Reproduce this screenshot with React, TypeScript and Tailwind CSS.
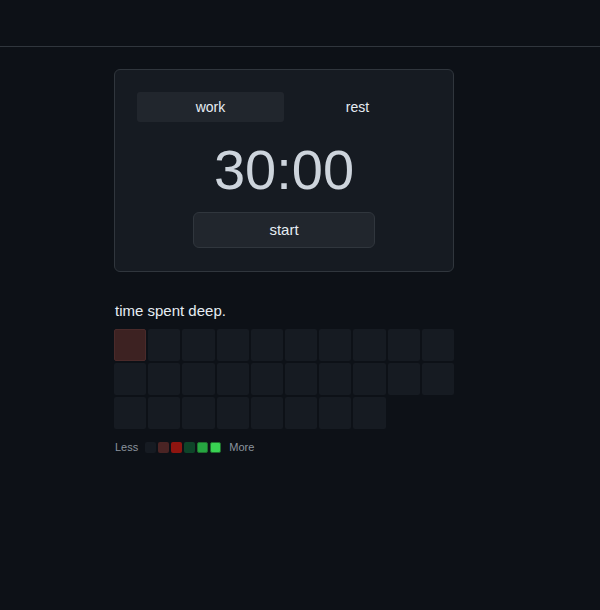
import React from "react";

const cells = Array.from({ length: 28 }, (_, i) => i);
const legend = ["bg-[#161b22]", "bg-[#4a2424]", "bg-[#8e1510]", "bg-[#0e4429]", "bg-[#26a641]", "bg-[#39d353]"];

export default function App() {
  return (
    <div className="min-h-[610px] w-full bg-[#0d1117] font-['Liberation_Sans',Arial,sans-serif] text-[#e6edf3]">
      <div className="h-[47px] border-b border-[#30363d]" />
      <div className="w-[568px] flex flex-col items-center pt-[22px]">
        <div className="w-[340px]">
          <div className="rounded-[6px] border border-[#30363d] bg-[#161b22] px-[22px] pt-[22px] pb-[23px] flex flex-col items-center">
            <div className="w-full grid grid-cols-2">
              <button className="h-[30px] rounded-[3px] bg-[#21262d] text-[14px] text-[#e6edf3]">work</button>
              <button className="h-[30px] rounded-[3px] text-[14px] text-[#e6edf3]">rest</button>
            </div>
            <div className="mt-[19px] h-[58px] flex items-center text-[56px] leading-none text-[#cdd4dc]">30:00</div>
            <button className="mt-[13px] w-[182px] h-[36px] rounded-[6px] border border-[#30363d] bg-[#21262d] text-[15px] text-[#e6edf3]">start</button>
          </div>
          <div className="mt-[27px] text-[15px] leading-[24px] text-[#e6edf3] pl-[1px]">time spent deep.</div>
          <div className="mt-[6px] grid grid-cols-10 gap-[2px]">
            {cells.map((i) => (
              <div key={i} className={`h-[32px] rounded-[2px] ${i === 0 ? "bg-[#3d2222] border border-[#4a2a2a]" : "bg-[#161b22]"}`} />
            ))}
          </div>
          <div className="mt-[10px] flex items-center text-[11px] text-[#8b949e] pl-[1px]">
            <span>Less</span>
            <div className="ml-[7px] mr-[8px] flex gap-[2px]">
              {legend.map((c, i) => (
                <div key={i} className={`w-[11px] h-[11px] rounded-[2px] ${c} ${i >= 4 ? "border border-[#1f6f2e]" : ""}`} />
              ))}
            </div>
            <span>More</span>
          </div>
        </div>
      </div>
    </div>
  );
}
